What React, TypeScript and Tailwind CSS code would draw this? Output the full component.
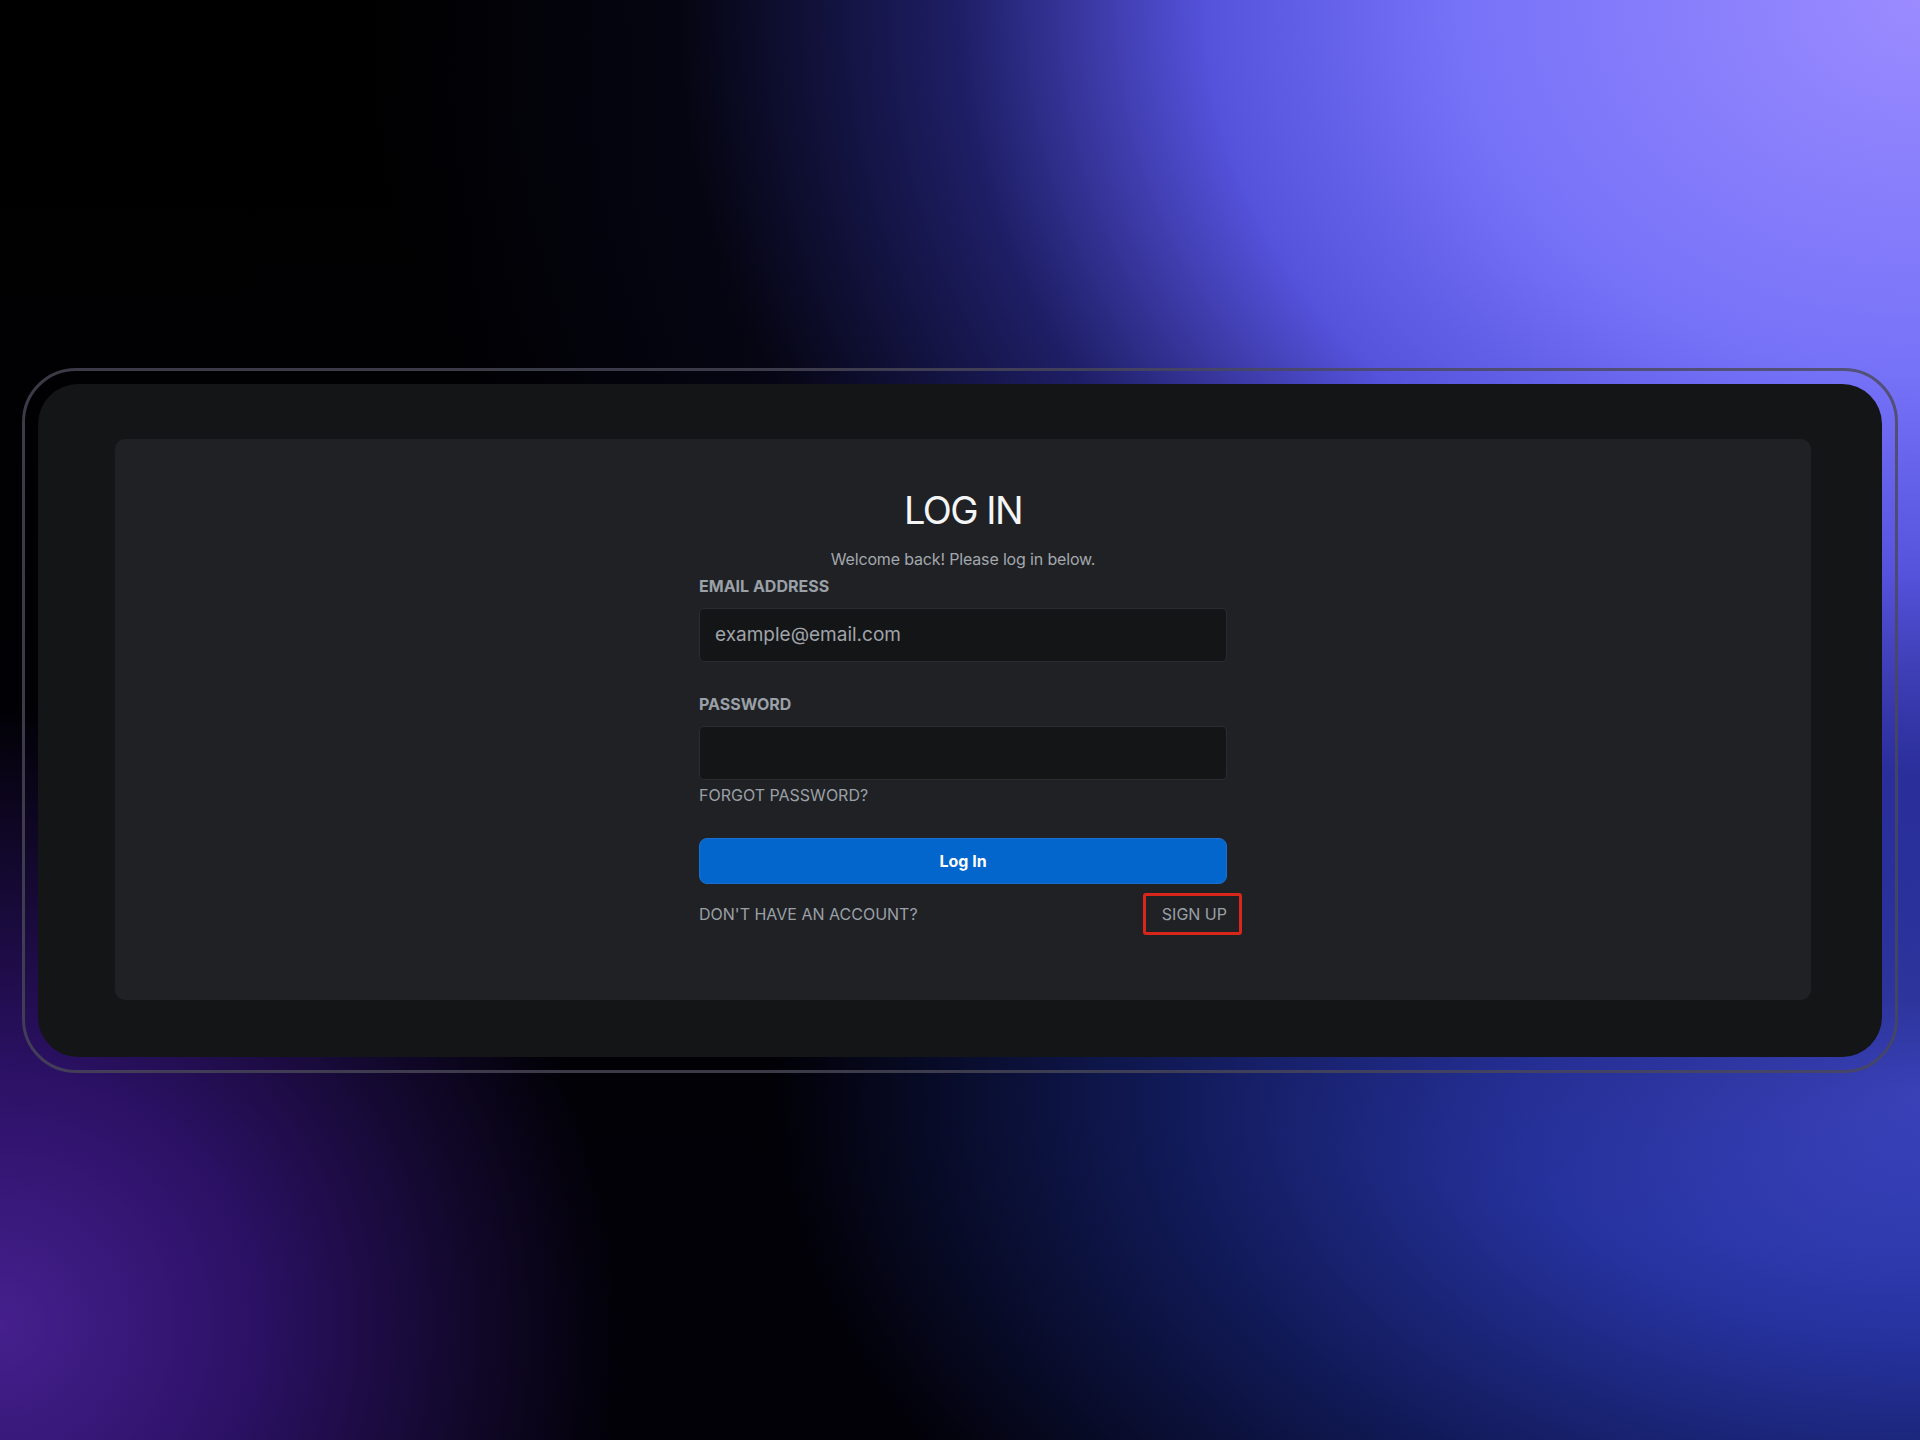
import React from 'react';

const LoginForm = () => {
  return (
    <form className="w-[528px] pt-[52px] flex flex-col" onSubmit={(e) => e.preventDefault()}>
      <h1 className="text-center text-[38px] leading-[38px] tracking-[-0.04em] text-[#f4f5f6]">LOG IN</h1>
      <p className="mt-[18px] text-center text-[16px] leading-6 tracking-[-0.01em] text-[#a3a8ae]">
        Welcome back! Please log in below.
      </p>

      {/* Email */}
      <label className="mt-[5px] text-[16px] leading-5 font-bold text-[#9aa0a7]">EMAIL ADDRESS</label>
      <input
        type="email"
        placeholder="example@email.com"
        className="mt-3 h-[54px] w-full rounded-[5px] border border-[#2a2c30] bg-[#141517] px-[15px] text-[19px] text-[#e5e7eb] placeholder-[#a0a4aa] outline-none"
      />

      {/* Password */}
      <label className="mt-8 text-[16px] leading-5 font-bold text-[#9aa0a7]">PASSWORD</label>
      <input
        type="password"
        className="mt-3 h-[54px] w-full rounded-[5px] border border-[#2a2c30] bg-[#141517] px-[15px] text-[19px] text-[#e5e7eb] outline-none"
      />
      <a href="#forgot" className="mt-[3px] text-[16px] leading-6 text-[#9aa0a7]">
        FORGOT PASSWORD?
      </a>

      <button
        type="submit"
        className="mt-[31px] h-[46px] w-full rounded-[8px] border border-[#1a70d2] bg-[#0366cc] text-[16px] font-bold text-white"
      >
        Log In
      </button>

      <div className="mt-[18px] flex items-center justify-between text-[16px] leading-6 text-[#9aa0a7]">
        <span>DON&apos;T HAVE AN ACCOUNT?</span>
        <span className="relative">
          <a href="#signup">SIGN UP</a>
          {/* highlight ring */}
          <span className="pointer-events-none absolute -left-[19px] -right-[15px] -top-[9px] -bottom-[9px] rounded-[3px] border-[3px] border-[#d8261b]" />
        </span>
      </div>
    </form>
  );
};

export default function App() {
  return (
    <div className="min-h-screen w-full flex items-center justify-center font-['Inter','Noto_Sans',sans-serif] bg-[radial-gradient(ellipse_1550px_1250px_at_100%_0%,#9b8bff_0%,#7672f8_30%,#5552dc_46%,rgba(50,50,170,0.6)_62%,rgba(20,20,70,0.25)_80%,transparent_100%),radial-gradient(ellipse_1150px_700px_at_100%_76%,#4049cc_0%,#26329e_35%,#111a58_65%,transparent_100%),radial-gradient(ellipse_620px_620px_at_0%_92%,#45208e_0%,#2c1166_40%,#12082c_75%,transparent_100%),linear-gradient(#000000,#020108)]">
      <div className="w-[1876px] rounded-[54px] border-[3px] border-[#4a4858]/80 p-[13px]">
        <div className="rounded-[40px] bg-[#141517] pl-[77px] pr-[71px] pt-[55px] pb-[57px]">
          <div className="h-[561px] rounded-[10px] bg-[#202124] flex justify-center">
            <LoginForm />
          </div>
        </div>
      </div>
    </div>
  );
}
